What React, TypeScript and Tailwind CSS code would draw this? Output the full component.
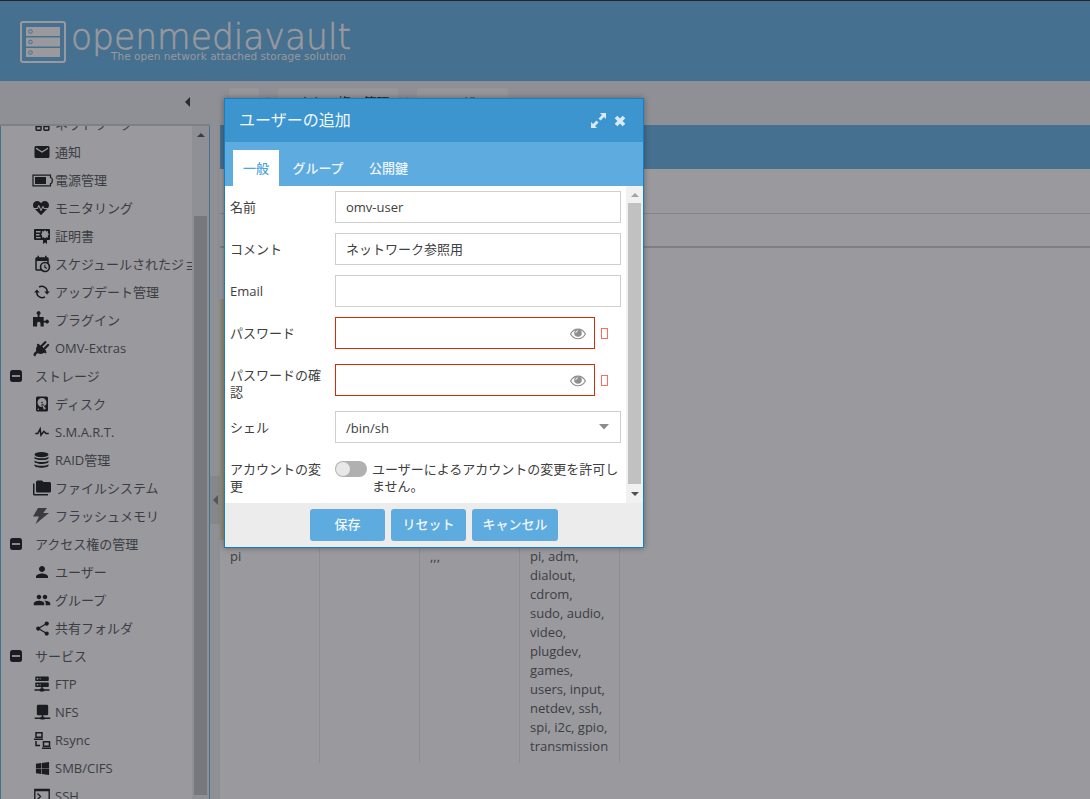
import type { ReactNode } from "react";
import { MdMail, MdPerson, MdPeople, MdShare } from "react-icons/md";
import { FaHeartbeat, FaWindows, FaHome } from "react-icons/fa";

const Mdi = ({ d, size = 18 }: { d: string; size?: number }) => (
  <svg width={size} height={size} viewBox="0 0 24 24" fill="currentColor"><path d={d} /></svg>
);

const PATHS = {
  network: "M4,3h5a2,2 0 0 1 2,2v4a2,2 0 0 1-2,2h-5a2,2 0 0 1-2-2v-4a2,2 0 0 1 2-2M15,3h5a2,2 0 0 1 2,2v4a2,2 0 0 1-2,2h-5a2,2 0 0 1-2-2v-4a2,2 0 0 1 2-2M4,13h5a2,2 0 0 1 2,2v4a2,2 0 0 1-2,2h-5a2,2 0 0 1-2-2v-4a2,2 0 0 1 2-2m0,3v3h5v-3zM15,13h5a2,2 0 0 1 2,2v4a2,2 0 0 1-2,2h-5a2,2 0 0 1-2-2v-4a2,2 0 0 1 2-2m0,3v3h5v-3z",
  calendar: "M15,13H16.5V15.82L18.94,17.23L18.19,18.53L15,16.69V13M19,8H5V19H9.67C9.24,18.09 9,17.07 9,16A7,7 0 0,1 16,9C17.07,9 18.09,9.24 19,9.67V8M5,21C3.89,21 3,20.1 3,19V5C3,3.89 3.89,3 5,3H6V1H8V3H16V1H18V3H19A2,2 0 0,1 21,5V11.1C22.24,12.36 23,14.09 23,16A7,7 0 0,1 16,23C14.09,23 12.36,22.24 11.1,21H5M16,11.15A4.85,4.85 0 0,0 11.15,16C11.15,18.68 13.32,20.85 16,20.85A4.85,4.85 0 0,0 20.85,16C20.85,13.32 18.68,11.15 16,11.15Z",
  disk: "M6,2H18A2,2 0 0,1 20,4V20A2,2 0 0,1 18,22H6A2,2 0 0,1 4,20V4A2,2 0 0,1 6,2M12,4A6,6 0 0,0 6,10C6,13.31 8.69,16 12.1,16L11.22,13.77C10.95,13.29 11.11,12.68 11.59,12.4L12.45,11.9C12.93,11.63 13.54,11.79 13.82,12.27L15.74,14.69C17.12,13.59 18,11.9 18,10A6,6 0 0,0 12,4M12,9A1,1 0 0,1 13,10A1,1 0 0,1 12,11A1,1 0 0,1 11,10A1,1 0 0,1 12,9M7,18A1,1 0 0,0 6,19A1,1 0 0,0 7,20A1,1 0 0,0 8,19A1,1 0 0,0 7,18M12.09,13.27L14.58,19.58L17.17,18.08L12.95,12.77L12.09,13.27Z",
  pulse: "M3,13H5.79L10.1,4.79L11.28,13.75L14.5,9.66L17.83,13H21V15H17L14.67,12.67L9.92,18.73L8.94,11.31L7,15H3V13Z",
  folders: "M22,4H14L12,2H6A2,2 0 0,0 4,4V16A2,2 0 0,0 6,18H22A2,2 0 0,0 24,16V6A2,2 0 0,0 22,4M2,6H0V11H0V20A2,2 0 0,0 2,22H20V20H2V6Z",
  server: "M13,18H14A1,1 0 0,1 15,19H22V21H15A1,1 0 0,1 14,22H10A1,1 0 0,1 9,21H2V19H9A1,1 0 0,1 10,18H11V16H4A1,1 0 0,1 3,15V11A1,1 0 0,1 4,10H20A1,1 0 0,1 21,11V15A1,1 0 0,1 20,16H13V18M4,2H20A1,1 0 0,1 21,3V7A1,1 0 0,1 20,8H4A1,1 0 0,1 3,7V3A1,1 0 0,1 4,2M9,6H10V4H9V6M9,14H10V12H9V14M5,4V6H7V4H5M5,12V14H7V12H5Z",
  nfs: "M6,1H18A2,2 0 0,1 20,3V14A2,2 0 0,1 18,16H13V18H14A1,1 0 0,1 15,19H23V21H15A1,1 0 0,1 14,22H10A1,1 0 0,1 9,21H1V19H9A1,1 0 0,1 10,18H11V16H6A2,2 0 0,1 4,14V3A2,2 0 0,1 6,1Z",
};

const Battery = () => (
  <svg width="21" height="13" viewBox="0 0 21 13" className="ml-px shrink-0">
    <path d="M1 1.100h17.500v2.400q1.800 0 1.800 3t-1.800 3v2.400h-17.500z" fill="none" stroke="currentColor" strokeWidth="1.200" />
    <path d="M3 3h11v7h-11z" fill="currentColor" />
  </svg>
);

const Certificate = () => (
  <svg width="16" height="15" viewBox="0 0 16 15">
    <path d="M1 0h14a1 1 0 0 1 1 1v9a1 1 0 0 1-1 1h-2v4l-2-1.600-2 1.600v-4h-8a1 1 0 0 1-1-1v-9a1 1 0 0 1 1-1z" fill="currentColor" />
    <path d="M2 2h4.500v1.500h-4.500zM2 5h3.500v1.500h-3.500zM2 8h4.500v1.300h-4.500zM11 1l1.200 1.400 1.900-.3-.3 1.900 1.300 1.300-1.300 1.200.3 1.900-1.900-.2-1.200 1.400-1.200-1.400-1.900.2.3-1.900-1.300-1.200 1.300-1.300-.3-1.900 1.900.3z" fill="#99999e" />
  </svg>
);

const Cached = () => (
  <svg width="16" height="14" viewBox="0 0 16 14" fill="none" stroke="currentColor" strokeWidth="1.500">
    <path d="M5 2.200a5.300 5.300 0 0 1 8.200 4.800M11 11.800a5.300 5.300 0 0 1-8.200-4.800" />
    <path d="M10.300 6.400h5.600l-2.800 3.200zM5.700 7.600h-5.600l2.800-3.200z" fill="currentColor" stroke="none" />
  </svg>
);

const Puzzle = () => (
  <svg width="16" height="16" viewBox="0 0 16 16" fill="currentColor">
    <path d="M0 6h4.700v-2.200a1.900 1.900 0 1 1 1.800 0v2.200h4.200v3.700h1.800a1.800 1.800 0 1 1 0 1.700h-1.800v4.100h-3.200v-3a1.700 1.700 0 0 0-3.400 0v3h-4.100z" />
  </svg>
);

const Plug = () => (
  <svg width="17" height="17" viewBox="0 0 17 17" fill="none" stroke="currentColor">
    <path d="M5.300 5.300l6.400 6.400c-2.500 2.200-5.100 2.200-7 .8-1.800-2-1.700-4.700.6-7.200z" fill="currentColor" />
    <path d="M5 4.800l7.400 7.400M7.500 7l4.800-4.800M10.300 9.800l4.800-4.800" strokeWidth="2.200" strokeLinecap="round" />
    <path d="M8 6l4.500 4.500-3 1-3.500-3.500z" fill="currentColor" />
    <path d="M5.300 11.700c-1.800 1-2.600.8-3.200 2.100-.3.700-.3 1.200-.8 2" strokeWidth="2.400" />
  </svg>
);

const Database = () => (
  <svg width="15" height="16" viewBox="0 0 15 16" fill="currentColor">
    <ellipse cx="7.500" cy="2.600" rx="7" ry="2.600" />
    <path d="M.5 4.700c2 2 12 2 14 0v1.200c0 2.900-14 2.900-14 0zM.5 8.500c2 2 12 2 14 0v1.200c0 2.900-14 2.900-14 0zM.5 12.300c2 2 12 2 14 0v1.200c0 2.900-14 2.900-14 0z" />
  </svg>
);

const Bolt = () => (
  <svg width="16" height="16" viewBox="0 0 16 16" fill="#3a3b40"><path d="M5 0h9l-3.800 5h5.800l-13.500 11 3.500-7.500h-6z" /></svg>
);

const Laptops = () => (
  <svg width="17" height="17" viewBox="0 0 17 17" fill="none" stroke="currentColor" strokeWidth="1.500">
    <path d="M2 .8h6v4.500h-6zM0 7.200h9M9.500 9.800h6v4.500h-6zM8 16.200h9M2 9v4.500h4" />
  </svg>
);

const Terminal = () => (
  <svg width="16" height="16" viewBox="0 0 16 16" fill="none" stroke="currentColor" strokeWidth="1.400">
    <path d="M.8 1.500h14.400v13h-14.400zM.8 2.500h14.400M3.500 5.500l3 3-3 3M8 12h4" />
  </svg>
);

const MinusBox = () => (
  <svg width="12" height="12" viewBox="0 0 12 12">
    <rect width="12" height="12" rx="2.500" fill="#1b1c21" />
    <path d="M2 6h8" stroke="#a5a5aa" strokeWidth="1.600" />
  </svg>
);

const Eye = () => (
  <svg width="16" height="12" viewBox="0 0 16 12">
    <path d="M.6 6c3.400-6.600 11.400-6.600 14.800 0-3.400 6.300-11.400 6.300-14.800 0z" fill="none" stroke="#8f8f8f" strokeWidth="1.200" />
    <circle cx="8" cy="5" r="3.800" fill="#8f8f8f" />
    <path d="M5.800 5a2.200 2.200 0 0 1 2.200-2.200" fill="none" stroke="#fff" strokeWidth=".9" />
  </svg>
);

const Caret = ({ dir, className = "" }: { dir: "up" | "down" | "left"; className?: string }) => {
  if (dir === "left") return <svg className={className} width="5" height="10" viewBox="0 0 5 10" fill="currentColor"><path d="M5 0v10l-5-5z" /></svg>;
  return (
    <svg className={className} width="8" height="4" viewBox="0 0 8 4" fill="currentColor">
      <path d={dir === "up" ? "M0 4h8l-4-4z" : "M0 0h8l-4 4z"} />
    </svg>
  );
};

type Item = { label: string; icon?: ReactNode };

const TREE: Item[] = [
  { label: "ネットワーク", icon: <Mdi d={PATHS.network} size={17} /> },
  { label: "通知", icon: <MdMail size={18} /> },
  { label: "電源管理", icon: <Battery /> },
  { label: "モニタリング", icon: <FaHeartbeat size={16} className="-ml-0.5" /> },
  { label: "証明書", icon: <Certificate /> },
  { label: "スケジュールされたジョブ", icon: <Mdi d={PATHS.calendar} /> },
  { label: "アップデート管理", icon: <Cached /> },
  { label: "プラグイン", icon: <span className="-ml-0.5 mb-0.5"><Puzzle /></span> },
  { label: "OMV-Extras", icon: <span className="-ml-0.5"><Plug /></span> },
  { label: "ストレージ" },
  { label: "ディスク", icon: <Mdi d={PATHS.disk} /> },
  { label: "S.M.A.R.T.", icon: <Mdi d={PATHS.pulse} /> },
  { label: "RAID管理", icon: <span className="-ml-0.5"><Database /></span> },
  { label: "ファイルシステム", icon: <Mdi d={PATHS.folders} /> },
  { label: "フラッシュメモリ", icon: <span className="-ml-0.5"><Bolt /></span> },
  { label: "アクセス権の管理" },
  { label: "ユーザー", icon: <MdPerson size={18} /> },
  { label: "グループ", icon: <MdPeople size={18} /> },
  { label: "共有フォルダ", icon: <MdShare size={17} /> },
  { label: "サービス" },
  { label: "FTP", icon: <Mdi d={PATHS.server} /> },
  { label: "NFS", icon: <Mdi d={PATHS.nfs} size={17} /> },
  { label: "Rsync", icon: <Laptops /> },
  { label: "SMB/CIFS", icon: <FaWindows size={15} /> },
  { label: "SSH", icon: <Terminal /> },
];

const GROUPS = ["pi, adm,", "dialout,", "cdrom,", "sudo, audio,", "video,", "plugdev,", "games,", "users, input,", "netdev, ssh,", "spi, i2c, gpio,", "transmission"];

function Header() {
  return (
    <header className="h-[81px] shrink-0 border-t border-[#25262a] bg-[#46708f] pl-5 pt-5">
      <svg width="336" height="46" viewBox="20 21 336 46">
        <rect x="21" y="22" width="44" height="40" rx="2" fill="none" stroke="#99999e" strokeWidth="2" />
        {[27, 37.500, 48].map(y => (
          <g key={y}>
            <rect x="26" y={y} width="34" height="9" fill="#99999e" />
            <circle cx="30.500" cy={y + 4.500} r="1.800" fill="none" stroke="#46708f" />
          </g>
        ))}
        <text x="71" y="49" textLength="280" lengthAdjust="spacingAndGlyphs" fill="#99999e" stroke="#99999e" strokeWidth=".6" className="font-['DejaVu_Sans'] text-[36px] font-extralight">openmediavault</text>
        <text x="111" y="60" textLength="235" fill="#99999e" className="font-['DejaVu_Sans'] text-[10.500px] font-normal">The open network attached storage solution</text>
      </svg>
    </header>
  );
}

function Sidebar() {
  return (
    <aside className="flex w-[210px] shrink-0 flex-col">
      <div className="flex h-[43px] shrink-0 items-center justify-end pb-px pr-5 text-[#2b2c31]">
        <Caret dir="left" />
      </div>
      <div className="h-0.5 shrink-0 bg-[#7f8085]" />
      <div className="flex min-h-0 flex-1 border-x border-[#46708f] bg-[#99999e]">
        <ul className="-mt-4 min-w-0 flex-1 overflow-hidden text-[#1b1c21] [clip-path:inset(16px_0_0_0)]">
          {TREE.map(({ label, icon }) => (
            <li key={label} className="flex h-7 items-center whitespace-nowrap">
              {icon ? (
                <span className="ml-[31px] flex w-5 shrink-0 justify-center">{icon}</span>
              ) : (
                <span className="ml-[9px] w-[23px] shrink-0"><MinusBox /></span>
              )}
              <span className={icon ? "pl-[3px] pt-px text-[#3c3d42]" : "pl-0.5 pt-px text-[#3c3d42]"}>{label}</span>
            </li>
          ))}
        </ul>
        <div className="flex w-[17px] shrink-0 flex-col items-center bg-[#8f9095] pb-1">
          <Caret dir="up" className="mt-[7px] shrink-0 text-[#3c3d42]" />
          <div className="mt-[79px] w-[13px] flex-1 bg-[#77787d]" />
        </div>
      </div>
    </aside>
  );
}

function Main() {
  return (
    <main className="flex min-w-0 flex-1 flex-col">
      <div className="flex h-11 shrink-0 items-start pl-[9px] pt-[7px] leading-[28px] text-[#2b2c31]">
        <span className="flex h-8 w-[30px] items-center justify-center rounded-[3px] bg-[#95959a]"><FaHome size={14} /></span>
        <span className="w-[19px] text-center text-[#77787d]">|</span>
        <span className="h-8 w-[120px] rounded-[3px] bg-[#95959a] text-center">アクセス権の管理</span>
        <span className="w-[19px] text-center text-[#77787d]">|</span>
        <span className="h-8 w-[91px] rounded-[3px] bg-[#95959a] text-center">ユーザー</span>
      </div>
      <div className="h-11 shrink-0 bg-[#46708f]" />
      <div className="flex-1 bg-[#99999e]">
        <div className="h-[45px] border-b border-[#84858a]" />
        <div className="h-[34px] border-b-2 border-[#7f8085]" />
        <div className="mt-[51px] h-[241px] w-[400px] bg-[#938c78]" />
        <div className="grid w-[400px] grid-cols-4 leading-[19px] text-[#3c3d42]">
          <div className="border-r border-[#8d8e93] px-2.5 py-[7px]">pi</div>
          <div className="border-r border-[#8d8e93]" />
          <div className="border-r border-[#8d8e93] px-2.5 py-[7px]">,,,</div>
          <div className="whitespace-nowrap border-r border-[#8d8e93] px-2.5 py-[7px]">
            {GROUPS.map(g => <p key={g}>{g}</p>)}
          </div>
        </div>
      </div>
    </main>
  );
}

const Label = ({ children }: { children: ReactNode }) => (
  <div className="w-[105px] shrink-0 pr-3 pt-2 leading-[17px]">{children}</div>
);

const Field = ({ label, value = "" }: { label: string; value?: string }) => (
  <div className="mb-2.5 flex">
    <Label>{label}</Label>
    <div className="flex h-8 w-[286px] items-center border border-[#cfcfcf] px-2.5 pt-0.5">{value}</div>
  </div>
);

const Password = ({ label }: { label: ReactNode }) => (
  <div className="mb-[15px] flex h-8">
    <Label>{label}</Label>
    <div className="flex h-8 w-[260px] items-center justify-end border border-[#cf2e0a] pr-2 pt-px"><Eye /></div>
    <span className="ml-1.5 mt-[11px] h-[11px] w-[7px] border border-[#ff6b5e]" />
  </div>
);

function UserDialog() {
  return (
    <div className="absolute left-[224px] top-[98px] flex h-[450px] w-[420px] flex-col border border-[#157fc0] text-[#404040] shadow-[0_0_6px_rgba(0,0,0,0.35)]">
      <div className="flex h-[43px] shrink-0 items-center bg-[#3c95cf] pl-3.5 pr-[17px] text-[#f2f7fb]">
        <h2 className="flex-1 pb-0.5 text-[16px]">ユーザーの追加</h2>
        <svg className="mr-2" width="15" height="15" viewBox="0 0 15 15" fill="#d9eaf6">
          <path d="M9 0h6v6l-2-2-3.500 3.500-2-2 3.500-3.500zM6 15h-6v-6l2 2 3.500-3.500 2 2-3.500 3.500z" />
        </svg>
        <svg width="12" height="12" viewBox="0 0 12 12"><path d="M2 2l8 8M10 2l-8 8" stroke="#d9eaf6" strokeWidth="3.700" /></svg>
      </div>
      <div className="flex h-11 shrink-0 items-end bg-[#5dabdf] pl-2 font-medium text-[#eef6fc]">
        <div className="flex h-9 w-[46px] items-center justify-center bg-white pt-0.5 text-[#4ea3da]">一般</div>
        <div className="flex h-9 w-[78px] items-center justify-center pt-0.5">グループ</div>
        <div className="flex h-9 w-[63px] items-center justify-center pt-0.5">公開鍵</div>
      </div>
      <div className="flex h-[317px] shrink-0 bg-white">
        <div className="flex-1 pl-[5px] pt-[5px]">
          <Field label="名前" value="omv-user" />
          <Field label="コメント" value="ネットワーク参照用" />
          <Field label="Email" />
          <Password label="パスワード" />
          <Password label={<p className="-mt-[5px]">パスワードの確認</p>} />
          <div className="mb-2.5 flex">
            <Label>シェル</Label>
            <div className="flex h-8 w-[286px] items-center justify-between border border-[#cfcfcf] pl-2.5 pr-[11px] pt-[3px]">
              /bin/sh
              <svg className="mb-[3px]" width="10" height="6" viewBox="0 0 10 6" fill="#8c8c8c"><path d="M0 0h10l-5 5.500z" /></svg>
            </div>
          </div>
          <div className="flex">
            <Label>アカウントの変更</Label>
            <div className="mt-2 flex h-4 w-8 shrink-0 rounded-full bg-[#b0b0b0] p-px"><div className="size-3.5 rounded-full bg-[#e8e8e8]" /></div>
            <p className="ml-[5px] w-[250px] pt-2 leading-[17px]">ユーザーによるアカウントの変更を許可しません。</p>
          </div>
        </div>
        <div className="flex w-[17px] shrink-0 flex-col items-center bg-[#f1f1f1]">
          <Caret dir="up" className="mt-[7px] text-[#a3a3a3]" />
          <div className="mt-1.5 w-[13px] flex-1 bg-[#c1c1c1]" />
          <Caret dir="down" className="mb-[7px] mt-2 text-[#505050]" />
        </div>
      </div>
      <div className="flex flex-1 items-center justify-center gap-1.5 bg-[#ececec] font-medium text-[#f0f7fc]">
        <button className="h-8 w-[75px] rounded-[3px] bg-[#5dabdf]">保存</button>
        <button className="h-8 w-[75px] rounded-[3px] bg-[#5dabdf]">リセット</button>
        <button className="h-8 w-[86px] rounded-[3px] bg-[#5dabdf]">キャンセル</button>
      </div>
    </div>
  );
}

export default function App() {
  return (
    <div className="relative flex h-[799px] w-[1090px] flex-col overflow-hidden bg-[#8f9095] font-['Open_Sans','Noto_Sans_CJK_JP',sans-serif] text-[13px] font-normal">
      <Header />
      <div className="flex min-h-0 flex-1">
        <Sidebar />
        <div className="w-2.5 shrink-0 pt-[395px]">
          <div className="flex h-12 items-center justify-center bg-[#86878c] text-[#55565b]"><Caret dir="left" /></div>
        </div>
        <Main />
      </div>
      <UserDialog />
    </div>
  );
}
